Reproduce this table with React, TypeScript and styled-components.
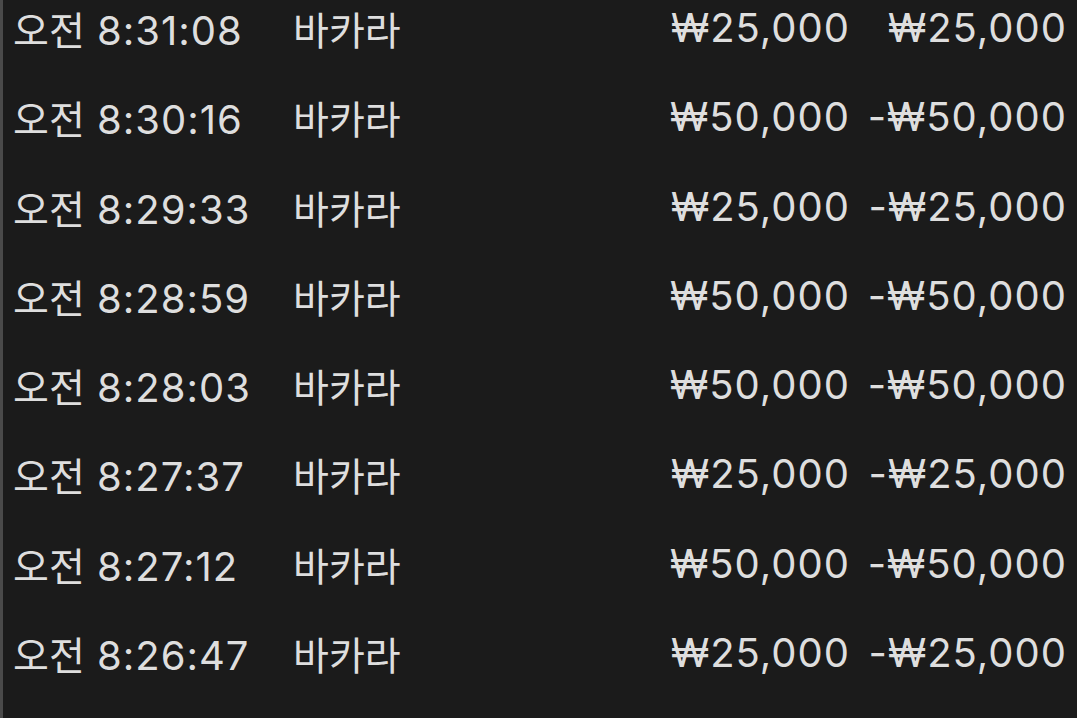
import React, { FC } from 'react';
import styled, { createGlobalStyle } from 'styled-components';

const GlobalStyle = createGlobalStyle`
  html, body {
    margin: 0;
    padding: 0;
    background: #1b1b1b;
    overflow: hidden;
  }
`;

const List = styled.div`
  width: 1077px;
  height: 718px;
  box-sizing: border-box;
  border-left: 3px solid #4a4a4a;
  background: #1b1b1b;
  color: #dedede;
  font-family: Inter, 'Noto Sans CJK KR', sans-serif;
  font-size: 40px;
  letter-spacing: 1px;
`;

const Row = styled.div`
  display: grid;
  grid-template-columns: 280px 1fr auto 217px;
  align-items: start;
  height: 89.3px;
  box-sizing: border-box;
  padding: 4px 10px 0 10px;
  line-height: 48px;
  white-space: nowrap;
`;

const Cell = styled.span<{ $right?: boolean }>`
  text-align: ${(p) => (p.$right ? 'right' : 'left')};
`;

const Korean = styled.span`
  font-family: 'Noto Sans CJK KR', sans-serif;
  font-size: 39px;
  letter-spacing: 0;
`;

type Bet = { time: string; game: string; stake: number; result: number };

const bets: Bet[] = [
  { time: '8:31:08', game: '바카라', stake: 25000, result: 25000 },
  { time: '8:30:16', game: '바카라', stake: 50000, result: -50000 },
  { time: '8:29:33', game: '바카라', stake: 25000, result: -25000 },
  { time: '8:28:59', game: '바카라', stake: 50000, result: -50000 },
  { time: '8:28:03', game: '바카라', stake: 50000, result: -50000 },
  { time: '8:27:37', game: '바카라', stake: 25000, result: -25000 },
  { time: '8:27:12', game: '바카라', stake: 50000, result: -50000 },
  { time: '8:26:47', game: '바카라', stake: 25000, result: -25000 },
];

const won = (n: number) => `${n < 0 ? '-' : ''}₩${Math.abs(n).toLocaleString('en-US')}`;

const App: FC = () => (
  <>
    <GlobalStyle />
    <List>
      {bets.map((b) => (
        <Row key={b.time}>
          <Cell>
            <Korean>오전</Korean> {b.time}
          </Cell>
          <Cell>
            <Korean>{b.game}</Korean>
          </Cell>
          <Cell $right>{won(b.stake)}</Cell>
          <Cell $right>{won(b.result)}</Cell>
        </Row>
      ))}
    </List>
  </>
);

export default App;
